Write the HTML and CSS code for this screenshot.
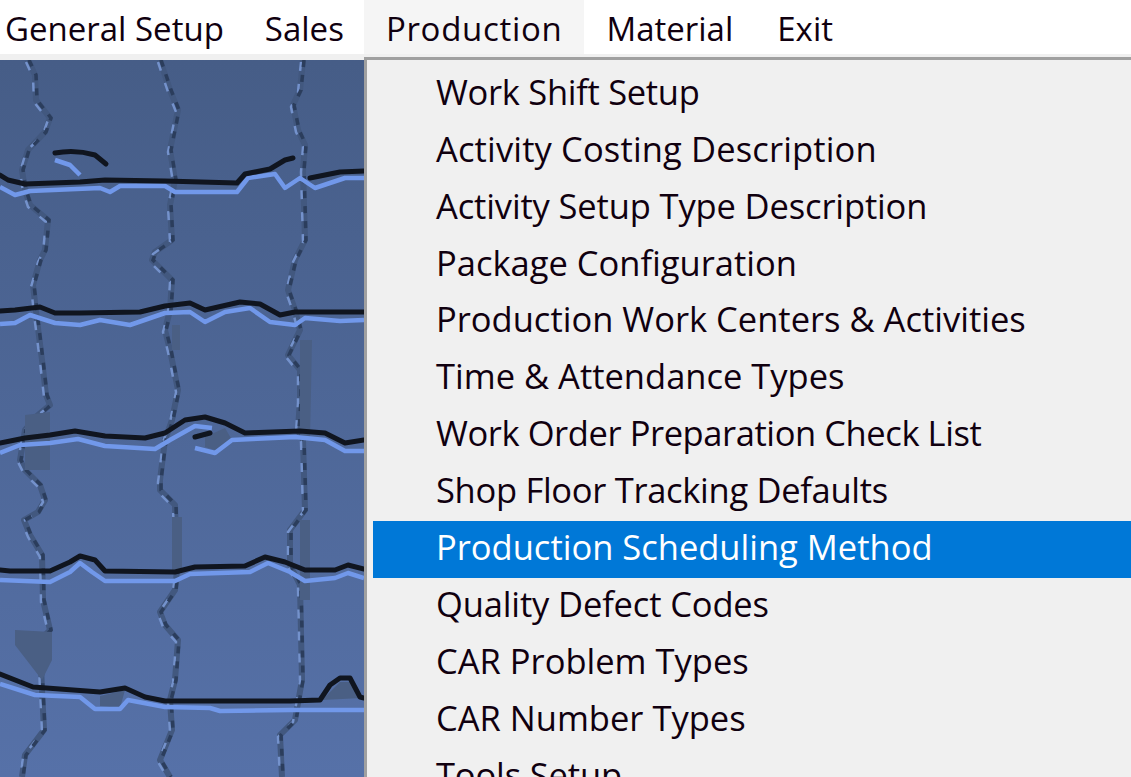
FILE: index.html
```html
<!DOCTYPE html>
<html lang="en">
<head>
<meta charset="utf-8">
<title>Production menu</title>
<link rel="stylesheet" href="styles.css">
</head>
<body>
<nav class="menubar">
  <span class="top-item top-item-first">General Setup</span>
  <span class="top-item top-item-snug">Sales</span>
  <span class="top-item top-item-open">Production</span>
  <span class="top-item">Material</span>
  <span class="top-item">Exit</span>
</nav>
<main class="workspace">
  <svg class="wallpaper" viewBox="0 60 364 717" aria-hidden="true">
    <defs>
      <linearGradient id="wall" x1="0" y1="0" x2="0" y2="1">
        <stop offset="0" stop-color="#465d87"/>
        <stop offset="1" stop-color="#5671a8"/>
      </linearGradient>
      <path id="v1" d="M28 60 L35 75 L36 100 L50 118 L45 132 L28 150 L22 170 L25 190 L30 205 L48 220 L45 250 L40 260 L33 285 L37 320 L42 360 L46 395 L50 405 L38 415 L25 430 L20 460 L25 470 L40 485 L45 500 L38 512 L24 520 L30 535 L42 555 L43 600 L50 630 L40 640 L42 690 L44 730 L25 755 L22 777"/>
      <path id="v2" d="M160 60 L170 90 L178 110 L170 150 L175 180 L170 205 L172 240 L155 252 L152 260 L172 280 L170 310 L165 330 L170 350 L178 390 L172 420 L165 440 L160 480 L160 490 L175 505 L177 570 L175 590 L160 612 L165 625 L178 640 L175 680 L170 700 L172 730 L160 760 L170 777"/>
      <path id="v3" d="M303 60 L300 90 L293 105 L298 130 L305 145 L303 170 L305 240 L295 260 L288 290 L295 310 L300 330 L288 355 L300 370 L300 400 L298 430 L303 440 L305 510 L290 530 L290 565 L300 585 L302 680 L295 720 L280 735 L282 777"/>
    </defs>
    <rect y="60" width="364" height="717" fill="url(#wall)"/>
    <g class="seam-base"><use href="#v1"/><use href="#v2"/><use href="#v3"/></g>
    <g class="seam-glow"><use href="#v1" x="-2" y="2"/><use href="#v2" x="-2" y="2"/><use href="#v3" x="-2" y="2"/></g>
    <g class="seam-dark"><use href="#v1" x="1"/><use href="#v2" x="1"/><use href="#v3" x="1"/></g>
    <path class="patch" d="M25 415 L50 412 L50 470 L25 470 Z M300 340 L312 340 L310 440 L300 440 Z M172 325 L180 325 L180 350 L172 350 Z M172 517 L182 517 L182 570 L172 570 Z M15 630 L52 632 L52 660 L42 680 L15 645 Z M100 696 L125 690 L120 708 L100 706 Z M322 700 L340 682 L350 682 L362 698 Z M205 437 L225 428 L232 440 L215 450 L205 447 Z M300 520 L310 520 L310 600 L300 600 Z"/>
    <g class="seam-h-light">
      <path d="M0 187 L15 195 L30 191 L100 188 L110 192 L120 186 L165 186 L175 192 L237 192 L248 178 L275 174 L285 188 L300 178 L315 188 L345 178 L364 178"/>
      <path d="M55 160 L70 165 L80 175"/>
      <path d="M0 324 L15 323 L30 315 L55 323 L80 325 L100 320 L130 325 L165 313 L190 312 L205 322 L225 312 L250 308 L270 322 L295 325 L305 318 L340 321 L364 320"/>
      <path d="M0 453 L20 445 L50 443 L78 439 L105 446 L155 449 L170 440 L195 426 L212 428 M195 448 L215 453 L232 440 L295 437 L325 440 L345 451 L364 451"/>
      <path d="M0 580 L50 582 L70 572 L80 563 L92 572 L105 581 L175 581 L190 574 L250 572 L268 563 L290 572 L305 581 L335 578 L348 573 L364 578"/>
      <path d="M0 684 L35 695 L80 697 L95 709 L120 709 L128 700 L165 707 L210 708 L220 711 L290 710 L364 710"/>
    </g>
    <g class="seam-h-dark">
      <path d="M0 175 L8 180 L25 184 L80 182 L105 180 L165 181 L237 183 L245 174 L270 169 L285 160 L293 158 M310 178 L340 172 L364 171"/>
      <path d="M55 153 Q75 149 95 155 L106 164"/>
      <path d="M0 311 L15 310 L40 307 L55 313 L80 313 L140 312 L165 306 L190 303 L205 310 L240 302 L260 304 L280 315 L295 312 L340 312 L364 312"/>
      <path d="M0 443 L25 438 L50 435 L75 431 L105 436 L145 438 L165 433 L185 420 L205 417 L225 423 L245 433 L300 431 L325 433 L345 443 L364 440"/>
      <path d="M195 437 L210 433"/>
      <path d="M0 570 L10 571 L50 571 L70 562 L80 556 L95 560 L105 571 L175 572 L195 567 L245 566 L265 557 L285 562 L305 570 L335 570 L348 565 L364 569"/>
      <path d="M0 674 L33 687 L100 692 L125 688 L145 697 L165 701 L290 701 L320 700 L330 685 L340 678 L350 678 L360 697 L364 698"/>
    </g>
  </svg>
</main>
<div class="dropdown">
  <div class="dropdown-row fit-narrow">Work Shift Setup</div>
  <div class="dropdown-row fit-wide">Activity Costing Description</div>
  <div class="dropdown-row fit-close">Activity Setup Type Description</div>
  <div class="dropdown-row">Package Configuration</div>
  <div class="dropdown-row">Production Work Centers &amp; Activities</div>
  <div class="dropdown-row">Time &amp; Attendance Types</div>
  <div class="dropdown-row fit-narrowest">Work Order Preparation Check List</div>
  <div class="dropdown-row fit-narrow">Shop Floor Tracking Defaults</div>
  <div class="dropdown-row dropdown-row-active">Production Scheduling Method</div>
  <div class="dropdown-row fit-close">Quality Defect Codes</div>
  <div class="dropdown-row">CAR Problem Types</div>
  <div class="dropdown-row">CAR Number Types</div>
  <div class="dropdown-row fit-close">Tools Setup</div>
</div>
</body>
</html>
```
FILE: styles.css
```css
html, body {
  margin: 0;
  height: 100%;
  overflow: hidden;
  background: #f0f0f0;
  font-family: "Open Sans", "Noto Sans", sans-serif;
  color: #10000f;
}
.menubar {
  display: flex;
  height: 54px;
  background: #fff;
  border-bottom: 6px solid #f0f0f0;
  font-size: 33px;
}
.top-item {
  padding: 7px 22px 0;
  line-height: 44px;
  white-space: nowrap;
}
.top-item-first { padding-left: 5px; padding-right: 19px; }
.top-item-snug { padding-right: 20px; }
.top-item-open { background: #f5f5f5; letter-spacing: 0.7px; }
.workspace { height: 717px; }
.wallpaper { display: block; width: 364px; height: 717px; filter: blur(0.5px); }
.seam-base use { fill: none; stroke: #42587f; stroke-width: 6; stroke-linejoin: round; }
.seam-glow use { fill: none; stroke: #7492cc; stroke-width: 2.5; stroke-dasharray: 9 13; }
.seam-dark use { fill: none; stroke: #2b3d5c; stroke-width: 3.5; stroke-dasharray: 7 8; }
.seam-h-light path { fill: none; stroke: #7198ea; stroke-width: 4.5; stroke-linejoin: round; }
.seam-h-dark path { fill: none; stroke: #10151f; stroke-width: 5; stroke-linejoin: round; stroke-linecap: round; }
.patch { fill: #4a5f84; }
.dropdown {
  position: absolute;
  left: 364px;
  top: 57px;
  width: 767px;
  height: 720px;
  box-sizing: border-box;
  overflow: hidden;
  background: #f0f0f0;
  border-left: 3px solid #a0a0a0;
  border-top: 3px solid #a0a0a0;
  padding: 5.9px 0 0 6px;
  font-size: 34.5px;
}
.dropdown-row {
  height: 56.9px;
  line-height: 52px;
  padding-left: 63px;
  white-space: nowrap;
}
.dropdown-row-active { background: #0078d7; color: #fff; }
.fit-narrowest { letter-spacing: -0.42px; }
.fit-narrow { letter-spacing: -0.3px; }
.fit-close { letter-spacing: -0.14px; }
.fit-wide { letter-spacing: 0.14px; }
```
